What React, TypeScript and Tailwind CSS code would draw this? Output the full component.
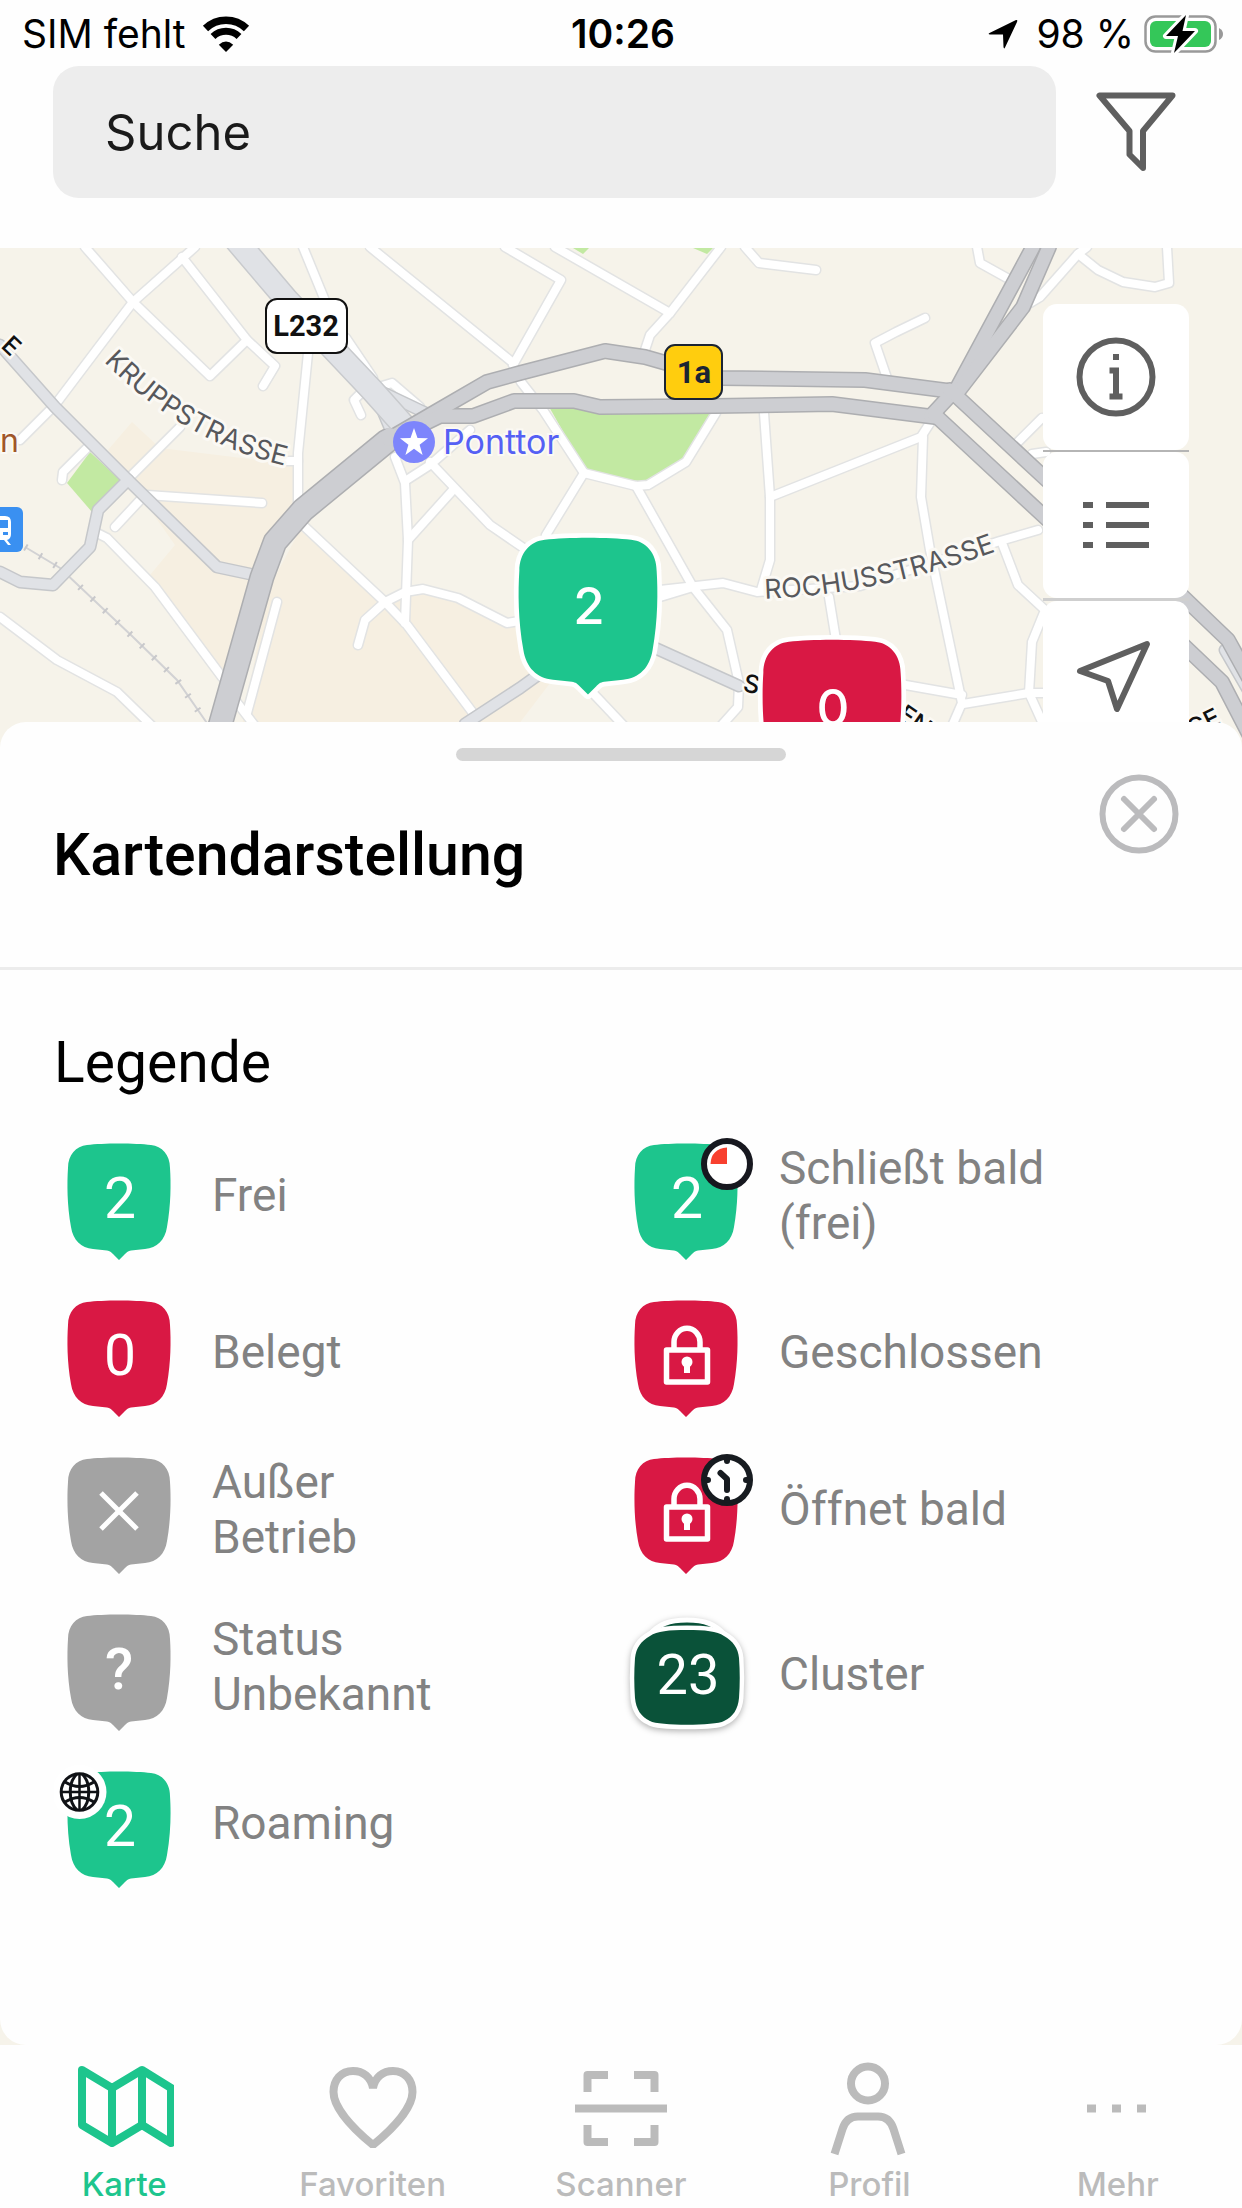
import type { ReactNode } from "react";

const GREEN = "#1dc58d";
const RED = "#d91844";
const GRAY = "#a3a3a3";

const PIN_PATH =
  "M20 2 C36 0 68 0 84 2 C95 3 103 12 103 25 C104 40 104 62 100 84 C98 97 90 105 78 106 L64 107.500 C61 108 60 109 58 111 L52 117 L46 111 C44 109 43 108 40 107.500 L26 106 C14 105 6 97 4 84 C0 62 0 40 1 25 C1 12 9 3 20 2 Z";

const minorStreets = [
  "M85,247 L133,302 L210,376 L247,340",
  "M195,247 L133,302 L98,348 L55,405 L20,440",
  "M182,257 L247,340 L275,366 L263,386",
  "M303,247 L326,303",
  "M346,338 L373,378",
  "M370,247 L512,362",
  "M505,247 L561,280 L513,365 L521,382 L543,410 L584,473 L546,535",
  "M555,247 L670,313",
  "M721,247 L670,313 L650,335 L645,350",
  "M745,247 L759,263 L816,270",
  "M925,318 L896,332 L875,343 L887,378",
  "M977,247 L980,263 L1007,278",
  "M1087,247 L1078,254 L1040,297 L1030,303",
  "M1078,254 L1098,270 L1123,282 L1155,287 L1169,283 L1167,247",
  "M1042,418 L1018,442",
  "M1032,454 L1046,452",
  "M764,413 L770,497 L770,560 L761,590",
  "M770,497 L921,437 L930,423",
  "M923,437 L921,497 L930,550 L962,703 L952,726",
  "M1038,530 L1000,541 L860,586 L757,592 L723,583 L660,590",
  "M693,587 L660,597",
  "M584,473 L636,486 L648,485 L686,462 L716,413",
  "M636,486 L693,587 L727,630 L739,683 L738,707 L721,726",
  "M829,597 L836,640",
  "M1002,543 L1018,585 L1045,610 L1032,642 L1029,693 L1044,726",
  "M963,704 L1029,693 L1044,693",
  "M900,684 L962,695",
  "M590,690 L624,726",
  "M470,430 L430,465 L405,481",
  "M430,462 L490,525 L525,549",
  "M395,457 L405,483 L408,540 L405,623",
  "M453,490 L408,540",
  "M305,527 L385,602 L407,625 L473,713",
  "M358,645 L365,620 L385,602 L405,592 L423,589 L458,598 L507,623 L525,620",
  "M277,602 L247,713",
  "M235,700 L255,726",
  "M308,353 L298,453 L298,505",
  "M280,461 L298,461",
  "M180,427 L130,477",
  "M143,497 L115,527",
  "M147,495 L262,503",
  "M88,447 L63,472 L62,480",
  "M97,533 L107,538 L155,587 L222,677",
  "M0,617 L57,660 L117,692 L152,726",
  "M361,415 L354,400 L362,392 L392,383 L420,407",
];

const secondaryRoads = [
  "M0,345 L55,407 L128,480 L217,567 L250,574",
  "M128,480 L98,510 L90,547 L53,585 L20,582 L0,572",
  "M465,724 L520,688 L545,670",
  "M655,648 L739,686",
  "M374,390 L395,440",
  "M367,385 L430,415",
  "M1225,650 L1248,690",
];

const highways = [
  "M387,440 L430,415 L487,382 L520,373 L605,351 L645,357 L680,367 L720,378 L865,380 L950,391",
  "M395,438 L440,416 L473,416 L514,401 L574,401 L600,407 L715,406 L832,404 L935,417",
  "M931,416 L957,388 L1033,247",
  "M957,393 L1023,307 L1049,247",
  "M950,390 L1048,481",
  "M935,415 L1048,520",
  "M1180,594 L1228,640 L1250,680",
  "M1180,642 L1222,682 L1250,736",
];

const RAIL = "M25,547 L60,568 L133,637 L177,680 L209,726";

function Roads({ paths, casing, fill, width }: { paths: string[]; casing: string; fill: string; width: number }) {
  return (
    <g fill="none" strokeLinejoin="round" strokeLinecap="round">
      {paths.map((d) => (
        <path key={d} d={d} stroke={casing} strokeWidth={width + 3} />
      ))}
      {paths.map((d) => (
        <path key={d} d={d} stroke={fill} strokeWidth={width} />
      ))}
    </g>
  );
}

function MapPin({ x, y, color, label }: { x: number; y: number; color: string; label: string }) {
  return (
    <g transform={`translate(${x} ${y})`}>
      <path d={PIN_PATH} transform="scale(1.346)" fill={color} stroke="#fff" strokeWidth={7} paintOrder="stroke" strokeLinejoin="round" />
      <text x={71} y={87} textAnchor="middle" fontSize={51} className="font-medium" fill="#fff">
        {label}
      </text>
    </g>
  );
}

function CityMap() {
  return (
    <svg
      aria-label="Karte"
      role="img"
      viewBox="0 248 1242 540"
      preserveAspectRatio="xMidYMin slice"
      className="absolute inset-x-0 top-0 h-[540px] w-full font-[Inter,sans-serif]"
    >
      <rect x="0" y="248" width="1242" height="540" fill="#f6f3ea" />
      <path d="M132,422 L160,448 L298,465 L298,510 L270,560 L250,640 L222,677 L150,575 L175,545 L108,450 Z" fill="#f6efe1" />
      <path d="M300,530 L385,602 L423,589 L520,622 L560,670 L470,788 L230,788 L268,590 Z" fill="#f6efe1" />
      <path d="M0,745 L0,788 L1242,788 L1242,745 Z" fill="#f6f3ea" />
      <path d="M90,452 L120,480 L92,512 L67,483 Z" fill="#c2e9a2" />
      <path d="M548,405 L714,408 L686,457 L643,482 L586,472 Z" fill="#c2e9a2" />
      <path d="M573,248 h16 l-6,6 Z M693,248 h20 l-6,6 Z" fill="#c2e9a2" />
      <path d={RAIL} fill="none" stroke="#d2d2d4" strokeWidth="2" />
      <path d={RAIL} fill="none" stroke="#c8c8cb" strokeWidth="7" strokeDasharray="2 15" />
      <Roads paths={minorStreets} casing="#e2e3e3" fill="#ffffff" width={8} />
      <Roads paths={secondaryRoads} casing="#c5c7ca" fill="#e0e2e6" width={10} />
      <Roads paths={["M236,240 L287,300 L372,390 L405,427"]} casing="#c8cacd" fill="#e0e2e6" width={22} />
      <Roads paths={highways} casing="#adaeb1" fill="#cdced2" width={13} />
      <Roads paths={["M216,740 L262,577 L275,542 L303,510 L387,441"]} casing="#adaeb1" fill="#cdced2" width={22} />
      <circle cx="390" cy="437" r="9" fill="#cdced2" />

      <defs>
        <path id="krupp" d="M96,353 Q181,445 296,468" />
        <path id="rochus" d="M752,599 Q870,598 1008,547" />
      </defs>
      <g fill="#57585c" stroke="#fbf9f4" strokeWidth="6" paintOrder="stroke" strokeLinejoin="round" fontSize="27">
        <text textAnchor="middle">
          <textPath href="#krupp" startOffset="50%">KRUPPSTRASSE</textPath>
        </text>
        <text textAnchor="middle">
          <textPath href="#rochus" startOffset="50%">ROCHUSSTRASSE</textPath>
        </text>
      </g>
      <g fill="#111" stroke="#fbf9f4" strokeWidth="5" paintOrder="stroke" fontSize="25" className="font-medium">
        <text transform="translate(0 347) rotate(43)">E</text>
        <text transform="translate(742 691) rotate(12)">S</text>
        <text transform="translate(896 718) rotate(35)">EN</text>
        <text transform="translate(1192 738) rotate(-26)">GE</text>
      </g>
      <text x="0" y="452" fontSize="32" fill="#a0562a" stroke="#fbf9f4" strokeWidth="4" paintOrder="stroke">
        n
      </text>

      <rect x="-22" y="507" width="45" height="45" rx="6" fill="#3a90f1" />
      <path d="M-4,516 H5 Q11,516 11,522 V534 Q11,539 7,540 L11,545 H8 L4,540 H-4 Z" fill="#fff" />
      <path d="M-4,520 H8 V528 H-4 Z M3,532 H8 V535 H3 Z" fill="#3a90f1" />

      <rect x="266" y="299" width="81" height="54" rx="11" fill="#fff" stroke="#111" strokeWidth="2" />
      <text x="306" y="336" textAnchor="middle" fontSize="29" fill="#111" className="font-[Roboto,sans-serif] font-bold">
        L232
      </text>
      <rect x="665" y="345" width="57" height="54" rx="10" fill="#ffcd0e" stroke="#1b2433" strokeWidth="2" />
      <text x="694" y="383" textAnchor="middle" fontSize="31" fill="#1b2433" className="font-[Roboto,sans-serif] font-bold">
        1a
      </text>

      <circle cx="414" cy="442" r="21" fill="#7d85fc" />
      <path d="M414,428 l3.500,10 10.500,0.300 -8.400,6.400 3,10.300 -8.600,-6.200 -8.600,6.200 3,-10.300 -8.400,-6.400 10.500,-0.300 Z" fill="#fff" />
      <text x="443" y="454" fontSize="34" fill="#5560f4" stroke="#fbf9f4" strokeWidth="4" paintOrder="stroke">
        Ponttor
      </text>

      <MapPin x={518} y={537} color={GREEN} label="2" />
      <MapPin x={762} y={639} color={RED} label="0" />
    </svg>
  );
}

function StatusBar() {
  return (
    <div className="grid h-[66px] grid-cols-3 items-center pt-[2px] pr-[18px] pl-[22px] text-[39px] leading-[44px]">
      <div className="flex items-center gap-[16px]">
        <span className="whitespace-nowrap">SIM fehlt</span>
        <svg viewBox="0 0 48 36" className="h-[36px] w-[48px]" aria-hidden="true">
          <path d="M3.500 12.500 A29.500 29.500 0 0 1 44.500 12.500" fill="none" stroke="#000" strokeWidth="7.500" />
          <path d="M11 20.500 A19 19 0 0 1 37 20.500" fill="none" stroke="#000" strokeWidth="7" />
          <path d="M24 36 L16.800 28.700 Q24 22.500 31.200 28.700 Z" fill="#000" />
        </svg>
      </div>
      <div className="text-center font-semibold">10:26</div>
      <div className="flex items-center justify-end gap-[10px]">
        <svg viewBox="0 0 30 30" className="mr-[8px] h-[30px] w-[30px]" aria-hidden="true">
          <path d="M1.500 14 L28 1 Q30 0.500 29 3 L17 28.500 Q16 30.500 15.500 28 L15 15.500 L2 15.500 Q-0.500 15 1.500 14 Z" fill="#000" />
        </svg>
        <span className="whitespace-nowrap">98 %</span>
        <svg viewBox="0 0 80 38" className="h-[38px] w-[80px]" aria-hidden="true">
          <rect x="1.500" y="1.500" width="70" height="35" rx="10" fill="none" stroke="#999" strokeWidth="2.500" />
          <rect x="6" y="6" width="61" height="26" rx="6" fill="#34c759" />
          <path d="M75 13 Q79 15 79 19 Q79 23 75 25 Z" fill="#999" />
          <path d="M42 0 L22 21 H34 L30 38 L51 16 H38.500 Z" fill="#000" stroke="#fff" strokeWidth="6" paintOrder="stroke" strokeLinejoin="round" />
        </svg>
      </div>
    </div>
  );
}

function SearchRow() {
  return (
    <div className="flex items-center gap-[32px] pr-[58px] pb-[50px] pl-[53px]">
      <input
        type="search"
        aria-label="Suche"
        placeholder="Suche"
        className="h-[132px] min-w-0 flex-1 rounded-[26px] bg-[#ededed] px-[52px] text-[49px] text-black outline-none placeholder:text-[#1a1a1a]"
      />
      <button type="button" aria-label="Filter" className="p-[4px]">
        <svg viewBox="0 0 80 80" className="size-[88px] p-[4px]" fill="none" stroke="#5f5f5f" strokeWidth="6" strokeLinejoin="round">
          <path d="M3.500 3.500 H76.500 L47 39 V76 L33.500 62.500 V39 Z" />
        </svg>
      </button>
    </div>
  );
}

function MapButton({ label, children }: { label: string; children: ReactNode }) {
  return (
    <button type="button" aria-label={label} className="flex h-[146px] w-[146px] items-center justify-center rounded-[14px] bg-white">
      <svg viewBox="0 0 80 80" className="size-[80px]" fill="none" stroke="#5f5f5f" strokeWidth="6" strokeLinejoin="round">
        {children}
      </svg>
    </button>
  );
}

function MapControls() {
  return (
    <div className="absolute top-[56px] right-[53px] flex flex-col">
      <MapButton label="Information">
        <circle cx="40" cy="40" r="36.500" />
        <path d="M37 17 h6 v6 h-6 Z M33.500 30.500 h9.500 v26 h3.500 v6 h-13 v-6 h3.500 v-20 h-3.500 Z" fill="#5f5f5f" stroke="none" />
      </MapButton>
      <div className="h-[2px] bg-[#b5b5b5]" />
      <MapButton label="Liste">
        <path d="M7 20 h10 M30 20 h43 M7 40 h10 M30 40 h43 M7 60 h10 M30 60 h43" />
      </MapButton>
      <div className="h-[3px] bg-[#cfcfcf]" />
      <MapButton label="Mein Standort">
        <path d="M4 37 L71 10 L41 75 L32 47 Z" />
      </MapButton>
    </div>
  );
}

function Pin({ color, children }: { color: string; children: ReactNode }) {
  return (
    <svg viewBox="0 0 140 157" className="h-[157px] w-[140px] shrink-0" aria-hidden="true">
      <path d={PIN_PATH} transform="translate(13 26)" fill={color} />
      {children}
    </svg>
  );
}

function PinNumber({ value }: { value: string }) {
  return (
    <text x="66" y="101" textAnchor="middle" fontSize="57" fill="#fff">
      {value}
    </text>
  );
}

function Lock() {
  return (
    <g fill="none" stroke="#fff">
      <rect x="45.500" y="76" width="41" height="32" strokeWidth="5.500" strokeLinejoin="round" />
      <path d="M53 75 V68 A12.800 13.500 0 0 1 79 68 V75" strokeWidth="5.500" />
      <circle cx="66" cy="88" r="5.500" fill="#fff" stroke="none" />
      <path d="M66 88 V99" strokeWidth="6" />
    </g>
  );
}

function ClosingBadge() {
  return (
    <g>
      <circle cx="106" cy="47" r="23" fill="#fff" stroke="#17181f" strokeWidth="6" />
      <path d="M106 47 H89.500 Q90 32 106 30.500 Z" fill="#f8402f" />
    </g>
  );
}

function OpeningBadge() {
  return (
    <g transform="translate(0 6)" stroke="#171b20" strokeLinecap="round" strokeLinejoin="round">
      <circle cx="106" cy="43" r="23" fill="#fff" strokeWidth="6" />
      <path d="M106 23 V24 M106 62 V63 M86 43 H87 M125 43 H126" strokeWidth="6" />
      <path d="M99.500 36 L106 42 V53" fill="none" strokeWidth="6" />
    </g>
  );
}

function GlobeBadge() {
  return (
    <g fill="none" stroke="#101216" strokeWidth="3">
      <circle cx="25.500" cy="47" r="27" fill="#fff" stroke="none" />
      <circle cx="25.500" cy="47" r="18.300" />
      <path d="M25.500 28.700 V65.300 M7.200 47 H43.800" strokeWidth="2.500" />
      <path d="M23 29 C14 37 14 57 23 65 M28 29 C37 37 37 57 28 65" />
      <path d="M11 37 Q25.500 46 40 37 M11 57 Q25.500 48 40 57" />
    </g>
  );
}

function ClusterIcon() {
  return (
    <svg viewBox="0 0 140 172" className="h-[172px] w-[140px] shrink-0 overflow-visible" aria-hidden="true">
      <g className="drop-shadow-[0_2px_3px_rgba(0,0,0,0.3)]">
        <path d="M28 47 C38 36 48 32 66 32 C84 32 94 36 104 47 Z" fill="#0a5239" stroke="#fff" strokeWidth="5" strokeLinejoin="round" />
        <path
          d="M66 42 C84 42 96 43 103 48 C112 53 117 60 118 70 C119 84 119 96 118 110 C117 121 112 129 103 133 C94 138 38 138 29 133 C20 129 15 121 14 110 C13 96 13 84 14 70 C15 60 20 53 29 48 C36 43 48 42 66 42 Z"
          fill="#0a5239"
          stroke="#fff"
          strokeWidth="9"
          paintOrder="stroke"
        />
      </g>
      <text x="67" y="106" textAnchor="middle" fontSize="56" fill="#fff">
        23
      </text>
    </svg>
  );
}

function LegendItem({ icon, children }: { icon: ReactNode; children: ReactNode }) {
  return (
    <li className="flex items-center gap-[18px]">
      {icon}
      <span className="w-[272px] text-[46px] leading-[55px] text-[#828282]">{children}</span>
    </li>
  );
}

function Sheet() {
  return (
    <section className="relative mt-[474px] flex grow flex-col rounded-[26px] bg-[#fefefe] pt-[26px] font-[Roboto,sans-serif]">
      <div className="h-[13px] w-[330px] self-center rounded-full bg-[#d6d6d6]" />
      <div className="flex items-start justify-between border-b-[3px] border-[#ececec] pt-[13px] pr-[63px] pb-[77px] pl-[53px]">
        <h1 className="pt-[46px] text-[59px] leading-[70px] font-medium text-black">Kartendarstellung</h1>
        <button type="button" aria-label="Schließen">
          <svg viewBox="0 0 80 80" className="size-[80px]" fill="none" stroke="#bbbbbd" strokeWidth="6" strokeLinecap="round">
            <circle cx="40" cy="40" r="36.500" />
            <path d="M25 25 L55 55 M55 25 L25 55" />
          </svg>
        </button>
      </div>
      <div className="px-[54px] pt-[61px] pb-[40px]">
        <h2 className="text-[57px] leading-[64px] text-black">Legende</h2>
        <div className="mt-[22px] grid grid-cols-2">
          <ul className="flex flex-col">
            <LegendItem icon={<Pin color={GREEN}><PinNumber value="2" /></Pin>}>Frei</LegendItem>
            <LegendItem icon={<Pin color={RED}><PinNumber value="0" /></Pin>}>Belegt</LegendItem>
            <LegendItem
              icon={
                <Pin color={GRAY}>
                  <path d="M47 62 L83 98 M83 62 L47 98" stroke="#fff" strokeWidth="5" />
                </Pin>
              }
            >
              Außer Betrieb
            </LegendItem>
            <LegendItem
              icon={
                <Pin color={GRAY}>
                  <text x="65" y="101" textAnchor="middle" fontSize="58" className="font-medium" fill="#fff">
                    ?
                  </text>
                </Pin>
              }
            >
              Status Unbekannt
            </LegendItem>
            <LegendItem icon={<Pin color={GREEN}><PinNumber value="2" /><GlobeBadge /></Pin>}>Roaming</LegendItem>
          </ul>
          <ul className="flex flex-col">
            <LegendItem icon={<Pin color={GREEN}><PinNumber value="2" /><ClosingBadge /></Pin>}>Schließt bald (frei)</LegendItem>
            <LegendItem icon={<Pin color={RED}><Lock /></Pin>}>Geschlossen</LegendItem>
            <LegendItem icon={<Pin color={RED}><Lock /><OpeningBadge /></Pin>}>Öffnet bald</LegendItem>
            <LegendItem icon={<ClusterIcon />}>Cluster</LegendItem>
          </ul>
        </div>
      </div>
    </section>
  );
}

const tabs = [
  {
    label: "Karte",
    active: true,
    icon: <path d="M8 12 L38 30 L68 12 L97 30 V85 L68 67 L38 85 L8 67 Z M38 30 V85 M68 12 V67" strokeLinejoin="round" />,
  },
  {
    label: "Favoriten",
    icon: (
      <path
        d="M50 30 C48 19 40 13 30 13 C18 13 10.500 22 10.500 34 C10.500 49 28 69 50 87 C72 69 89.500 49 89.500 34 C89.500 22 82 13 70 13 C60 13 52 19 50 30 Z"
        strokeLinejoin="bevel"
      />
    ),
  },
  {
    label: "Scanner",
    icon: (
      <path
        d="M16.500 34 V17 H37 M63 17 H83.500 V34 M83.500 67 V84 H63 M37 84 H16.500 V67 M4 50.500 H96"
        strokeLinejoin="round"
      />
    ),
  },
  {
    label: "Profil",
    icon: (
      <>
        <circle cx="49" cy="25.500" r="17" />
        <path d="M15.500 96 L23.500 71 C26 63 31 58.500 39 58.500 H59 C67 58.500 72 63 74.500 71 L82.500 96" />
      </>
    ),
  },
  { label: "Mehr", icon: <path d="M19 50.500 h9 M44 50.500 h9 M69 50.500 h9" /> },
];

function TabBar() {
  return (
    <nav className="grid grid-cols-5 bg-[#fefefe] pt-[13px] pb-[4px]">
      {tabs.map((tab) => (
        <button
          key={tab.label}
          type="button"
          aria-current={tab.active ? "page" : undefined}
          className={
            tab.active
              ? "flex flex-col items-center gap-[6px] text-[#1dc58d]"
              : "flex flex-col items-center gap-[6px] text-[#bbbbbb]"
          }
        >
          <svg viewBox="0 0 100 100" className="size-[100px]" fill="none" stroke="currentColor" strokeWidth="8" aria-hidden="true">
            {tab.icon}
          </svg>
          <span className="text-[33px] leading-[40px] font-medium">{tab.label}</span>
        </button>
      ))}
    </nav>
  );
}

export default function App() {
  return (
    <div className="flex min-h-screen flex-col bg-[#fefefe] font-[Inter,sans-serif] text-black">
      <header>
        <StatusBar />
        <SearchRow />
      </header>
      <main className="relative flex grow flex-col bg-[#f6f3ea]">
        <CityMap />
        <MapControls />
        <Sheet />
      </main>
      <TabBar />
    </div>
  );
}
